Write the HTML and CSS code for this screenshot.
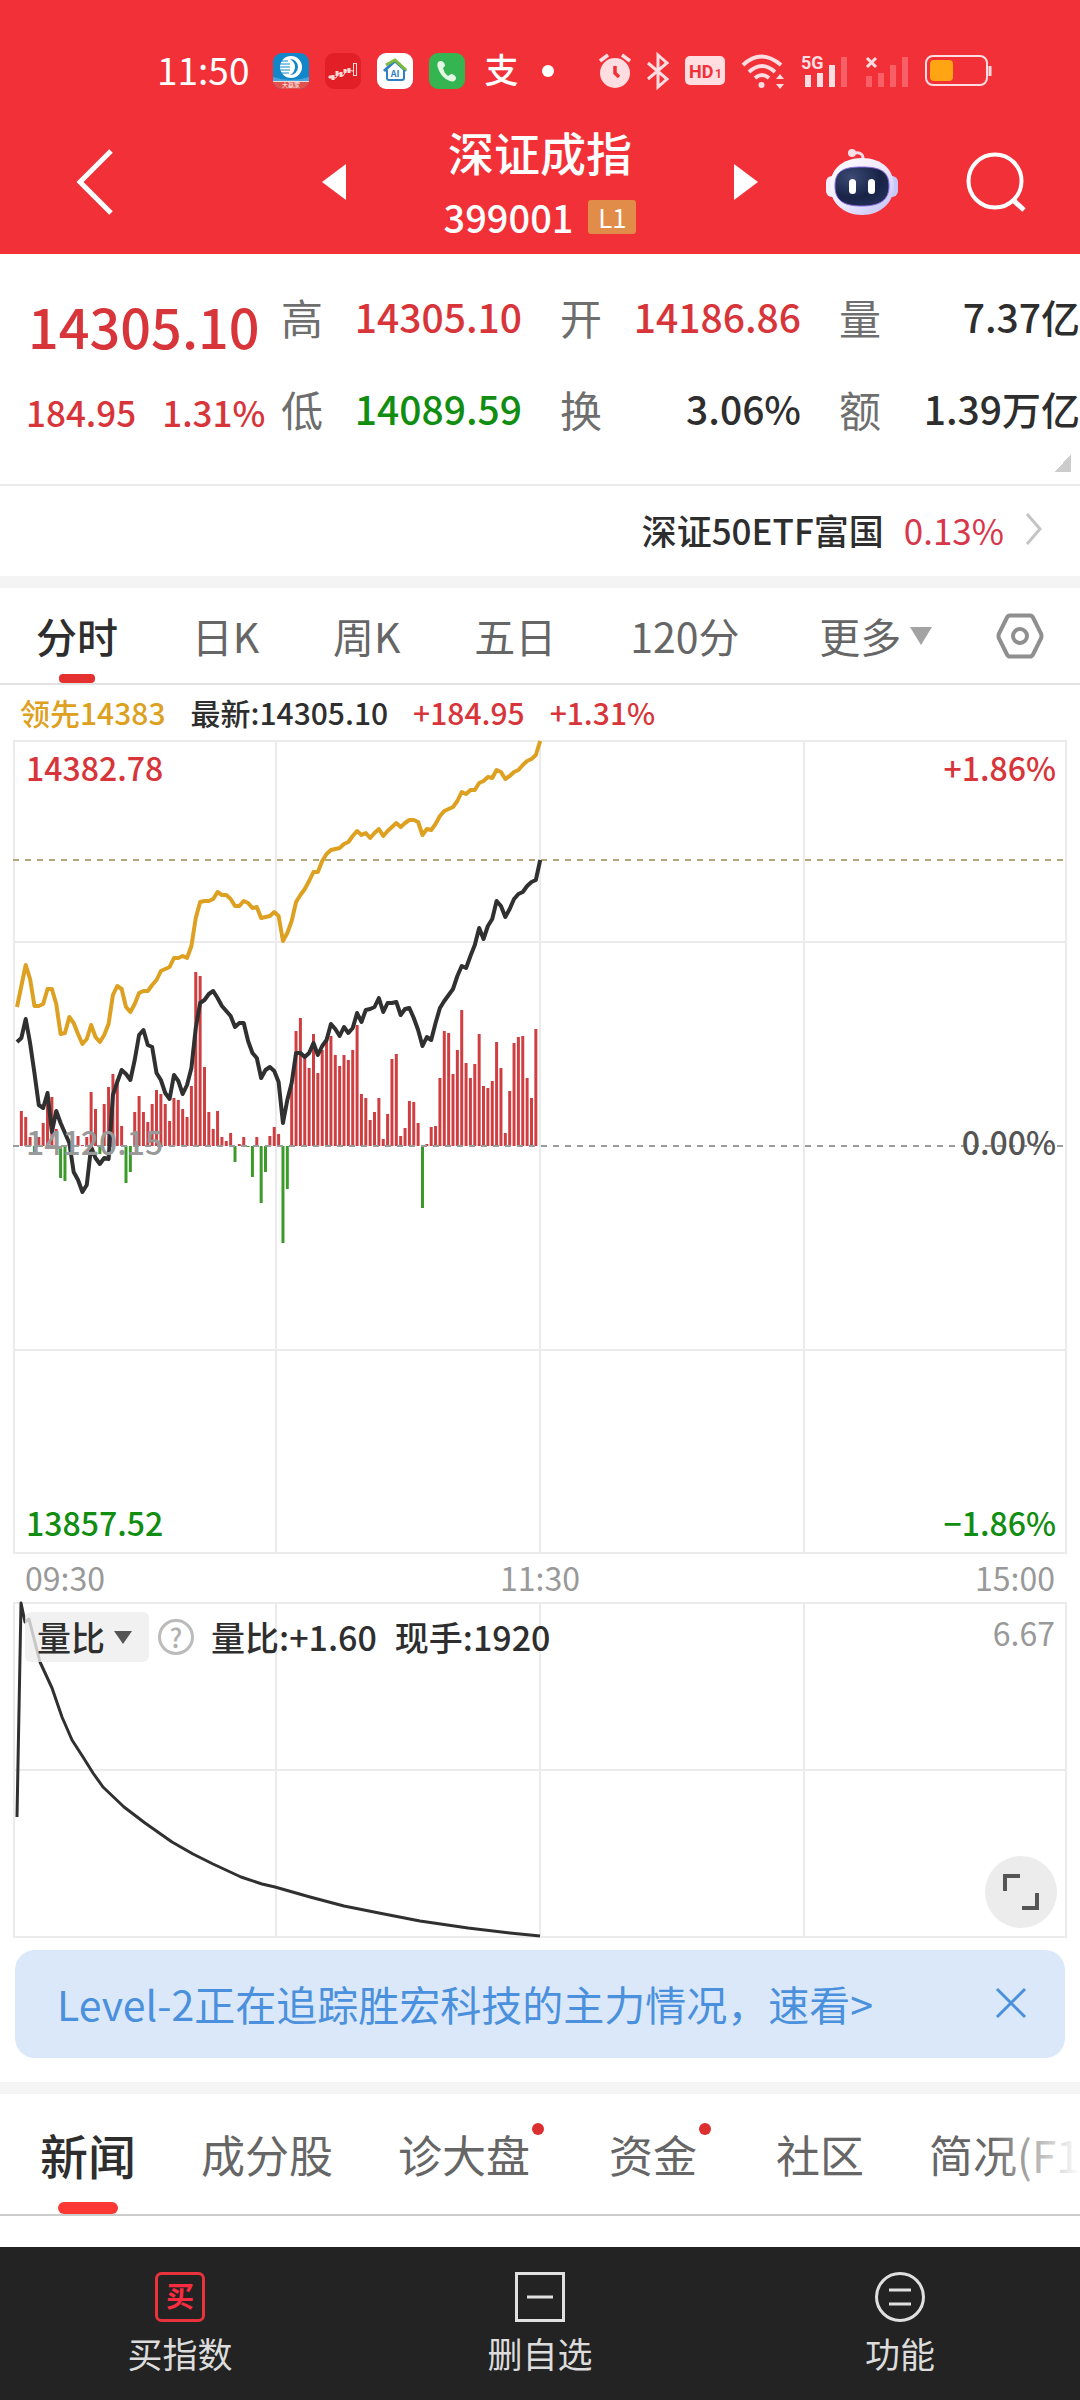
FILE: index.html
```html
<!DOCTYPE html>
<html lang="zh-CN">
<head>
<meta charset="utf-8">
<meta name="viewport" content="width=device-width, initial-scale=1">
<title>深证成指 399001</title>
<link rel="stylesheet" href="styles.css">
</head>
<body>
<div class="app">
  <header class="top">
    <div class="status">
      <div class="status-left">
        <span class="clock">11:50</span>
        <svg class="app-icon" viewBox="0 0 36 36" aria-hidden="true">
          <rect width="36" height="36" rx="9" fill="#1187c9"/>
          <path d="M0 27h36a9 9 0 0 1-9 9H9a9 9 0 0 1-9-9z" fill="#e0524c"/>
          <path d="M0 24q18 6 36 0v4H0z" fill="#4aa3dc"/>
          <path d="M0 28.500h36" stroke="#f6d9d6" stroke-width="1"/>
          <circle cx="18" cy="14" r="11" fill="#fff"/>
          <path d="M17 6a8 8 0 0 1 0 16q5-3 5-8t-5-8z" fill="#1187c9"/>
          <path d="M6 8h9M5 11h12M5 14h12M5 17h12M7 20h9" stroke="#1187c9" stroke-width="1.200"/>
          <text x="18" y="34" text-anchor="middle" font-size="6" fill="#fff">大赢家</text>
        </svg>
        <svg class="app-icon" viewBox="0 0 36 36" aria-hidden="true">
          <rect width="36" height="36" rx="9" fill="#e21f26"/>
          <path d="M4 24h3M8 22v5M12 18v5M16 19v5M20 16v4M24 15v5" stroke="#ffd9d6" stroke-width="3"/>
          <path d="M3 24l8 1 3-5 4 3 4-6 6 1" stroke="#ffd9d6" fill="none"/>
          <rect x="28.500" y="10.500" width="3" height="12" fill="none" stroke="#ffd9d6"/>
        </svg>
        <svg class="app-icon" viewBox="0 0 36 36" aria-hidden="true">
          <rect width="36" height="36" rx="9" fill="#fff"/>
          <path d="M7 18 18 8l11 10" fill="none" stroke="#2f7fc4" stroke-width="3"/>
          <path d="M9 12 18 7l11 10" fill="none" stroke="#7dbb3c" stroke-width="3"/>
          <path d="M10 17v8q0 2 2 2h13q2 0 2-2v-8" fill="none" stroke="#2f7fc4" stroke-width="2"/>
          <text x="18" y="24" text-anchor="middle" font-size="9" font-weight="700" fill="#2f7fc4">AI</text>
        </svg>
        <svg class="app-icon" viewBox="0 0 36 36" aria-hidden="true">
          <rect width="36" height="36" rx="9" fill="#35b452"/>
          <path d="M11 8c-3 1-3 4-2 7 2 6 6 11 12 13 3 1 6 0 6-3 0-2-3-4-5-4l-3 2c-3-2-4-5-5-8l2-2c0-3-2-5-5-5z" fill="#e2f8e4"/>
        </svg>
        <span class="pay" aria-hidden="true">支</span>
        <span class="more-dot"></span>
      </div>
      <div class="status-right">
        <svg width="32" height="36" viewBox="0 0 32 36" aria-hidden="true">
          <circle cx="16" cy="20" r="15" fill="#ffdde0"/>
          <path d="M1 8 9 2M31 8l-8-6" stroke="#ffdde0" stroke-width="3.500"/>
          <path d="M16 13v7l4 4" fill="none" stroke="#f23038" stroke-width="3.500"/>
        </svg>
        <svg width="22" height="36" viewBox="0 0 22 36" aria-hidden="true">
          <path d="M1 10 20 26l-9 8V2l9 8L1 26" fill="none" stroke="#ffdde0" stroke-width="3"/>
        </svg>
        <svg width="40" height="30" viewBox="0 0 40 30" aria-hidden="true">
          <rect width="40" height="29" rx="5" fill="#ffdde0"/>
          <text x="4" y="22" font-size="18" font-weight="700" fill="#f23038" class="mark">HD</text>
          <text x="30" y="22" font-size="12" font-weight="700" fill="#f23038" class="mark">1</text>
        </svg>
        <svg width="44" height="36" viewBox="0 0 44 36" aria-hidden="true">
          <g fill="none" stroke="#ffdde0" stroke-width="4"><path d="M2 12q18-17 38 0"/><path d="M8 19q13-12 26 0"/><path d="M14 25q7-6 14 0"/></g>
          <circle cx="20.500" cy="32" r="3" fill="#ffdde0"/>
          <path d="M39 21l4 5h-8zM39 36l4-5h-8z" fill="#ffdde0"/>
        </svg>
        <svg width="48" height="36" viewBox="0 0 48 36" aria-hidden="true">
          <text x="0" y="16" font-size="18" font-weight="700" fill="#ffdde0" class="mark">5G</text>
          <path d="M7 22v12M19 20v14M31 12v22" stroke="#ffdde0" stroke-width="6"/>
          <path d="M43 4v30" stroke="#f85f66" stroke-width="6"/>
        </svg>
        <svg width="44" height="36" viewBox="0 0 44 36" aria-hidden="true">
          <path d="M2 5l9 9M11 5l-9 9" stroke="#ffdde0" stroke-width="3"/>
          <path d="M4 23v11M16 20v14M28 12v22M40 4v30" stroke="#f85f66" stroke-width="6"/>
        </svg>
        <svg width="67" height="32" viewBox="0 0 67 32" aria-hidden="true">
          <rect x="1" y="1" width="61" height="29" rx="7" fill="none" stroke="#ffdde0" stroke-width="2"/>
          <rect x="5" y="5" width="23" height="21" rx="4" fill="#ffa412"/>
          <path d="M65 11v10" stroke="#ffdde0" stroke-width="3"/>
        </svg>
      </div>
    </div>
    <nav class="titlebar">
      <div class="title-left">
        <button class="icon-btn" aria-label="返回"><svg width="38" height="66" viewBox="0 0 38 66"><path d="M35 2 4 33l31 31" fill="none" stroke="#fff" stroke-width="5"/></svg></button>
        <button class="icon-btn" aria-label="上一个"><svg width="24" height="36" viewBox="0 0 24 36"><path d="M24 0v36L0 18z" fill="#fff"/></svg></button>
      </div>
      <div class="title-mid">
        <h1>深证成指</h1>
        <div class="code">399001<span class="badge">L1</span></div>
      </div>
      <div class="title-right">
        <button class="icon-btn" aria-label="下一个"><svg width="24" height="36" viewBox="0 0 24 36"><path d="M0 0v36l24-18z" fill="#fff"/></svg></button>
        <button class="icon-btn robot" aria-label="智能助手">
          <svg width="72" height="68" viewBox="0 0 72 68">
            <defs><linearGradient id="shell" x1="0" y1="0" x2="1" y2="1"><stop offset="0" stop-color="#fff"/><stop offset=".5" stop-color="#efe9ff"/><stop offset="1" stop-color="#bdbdf5"/></linearGradient>
            <radialGradient id="visor" cx=".3" cy=".25" r=".9"><stop offset="0" stop-color="#3b4a74"/><stop offset=".6" stop-color="#182346"/><stop offset="1" stop-color="#26305c"/></radialGradient></defs>
            <path d="M28 5q10-2 9 8" fill="none" stroke="#f3dcea" stroke-width="3"/><circle cx="26" cy="5" r="4" fill="#f8dfe8"/>
            <rect y="28" width="12" height="21" rx="6" fill="#f3eefc"/><rect x="60" y="28" width="12" height="21" rx="6" fill="#c6c8fa"/>
            <path d="M36 10c20 0 32 12 32 28S55 67 36 67 4 54 4 38s12-28 32-28z" fill="url(#shell)"/>
            <path d="M36 19c19 0 27 5 27 19S54 58 36 58 9 53 9 38s8-19 27-19z" fill="url(#visor)" stroke="#8667df" stroke-width="1"/>
            <rect x="23" y="31" width="7" height="15" rx="3.500" fill="#fff"/><rect x="42" y="31" width="7" height="15" rx="3.500" fill="#fff"/>
          </svg>
        </button>
        <button class="icon-btn" aria-label="搜索"><svg width="60" height="60" viewBox="0 0 60 60"><circle cx="29" cy="29" r="26.500" fill="none" stroke="#fff" stroke-width="4"/><path d="M47 48l11 10" stroke="#fff" stroke-width="5"/></svg></button>
      </div>
    </nav>
  </header>

  <main>
    <section class="quote">
      <div class="last">
        <strong class="up price">14305.10</strong>
        <div class="change up"><span>184.95</span><span>1.31%</span></div>
      </div>
      <dl class="stats">
        <div><dt>高</dt><dd class="up">14305.10</dd></div>
        <div><dt>开</dt><dd class="up">14186.86</dd></div>
        <div><dt>量</dt><dd>7.37亿</dd></div>
        <div><dt>低</dt><dd class="down">14089.59</dd></div>
        <div><dt>换</dt><dd>3.06%</dd></div>
        <div><dt>额</dt><dd>1.39万亿</dd></div>
      </dl>
      <span class="corner"></span>
    </section>

    <a class="etf" href="#etf">
      <span>深证50ETF富国</span><span class="etf-rate">0.13%</span>
      <svg width="20" height="34" viewBox="0 0 20 34" aria-hidden="true"><path d="M3 2l13 15L3 32" fill="none" stroke="#c4c4c4" stroke-width="3"/></svg>
    </a>

    <nav class="periods">
      <button class="on">分时</button>
      <button>日K</button>
      <button>周K</button>
      <button>五日</button>
      <button>120分</button>
      <button class="more">更多<svg width="22" height="18" viewBox="0 0 22 18" aria-hidden="true"><path d="M0 0h22L11 18z" fill="#a3a3a3"/></svg></button>
      <button aria-label="设置"><svg width="48" height="46" viewBox="0 0 48 46"><path d="M14 2.500h20q2 0 3 2l8 16q1 2.500 0 5l-8 16q-1 2-3 2H14q-2 0-3-2l-8-16q-1-2.500 0-5l8-16q1-2 3-2z" fill="none" stroke="#8f8f8f" stroke-width="4"/><circle cx="24" cy="23" r="7" fill="none" stroke="#8f8f8f" stroke-width="4"/></svg></button>
    </nav>

    <section class="charts">
      <div class="legend"><span class="lead">领先14383</span><span>最新:14305.10</span><span class="up">+184.95</span><span class="up">+1.31%</span></div>
      <div class="plot">
        <svg viewBox="0 0 1054 814" role="img" aria-label="分时走势">
          <path class="grid" d="M1 1H1053V813H1zM263 1V813M527 1V813M791 1V813M1 202H1053M1 610H1053"/>
          <g id="bars"></g>
          <path d="M0 120H1054" stroke="#b7a57c" stroke-width="2" stroke-dasharray="6 6" fill="none"/>
          <path d="M0 406H1054" stroke="#9b9b9b" stroke-width="2" stroke-dasharray="6 6" fill="none"/>
          <polyline id="lead-line" class="line" stroke="#dda021"/>
          <polyline id="price-line" class="line" stroke="#303030"/>
        </svg>
        <div class="axis axis-top up"><span>14382.78</span><span>+1.86%</span></div>
        <div class="axis axis-mid"><span class="base">14120.15</span><span>0.00%</span></div>
        <div class="axis axis-bottom down"><span>13857.52</span><span>−1.86%</span></div>
      </div>
      <div class="times"><span>09:30</span><span>11:30</span><span>15:00</span></div>
      <div class="plot">
        <svg viewBox="0 0 1054 336" role="img" aria-label="量比走势">
          <path class="grid" d="M1 1H1053V335H1zM263 1V335M527 1V335M791 1V335M1 168H1053"/>
          <polyline class="line thin" stroke="#303030" points="4,215 8,1 12,20 16,17 27,60 39,86 49,115 59,138 70,155 80,171 90,185 111,205 132,221 159,240 180,252 200,262 228,275 249,282 262,285 297,295 331,304 366,311 407,319 455,326 497,331 527,334"/>
        </svg>
        <div class="indicator">
          <button class="chip">量比<svg width="18" height="13" viewBox="0 0 18 13" aria-hidden="true"><path d="M0 0h18L9 13z" fill="#555"/></svg></button>
          <button class="help" aria-label="说明">?</button>
          <span>量比:+1.60</span><span class="hand">现手:1920</span>
          <span class="peak">6.67</span>
        </div>
        <button class="expand" aria-label="全屏"><svg width="38" height="38" viewBox="0 0 38 38"><path d="M3 18V3h15M35 20v15H20" fill="none" stroke="#555" stroke-width="4"/></svg></button>
      </div>
    </section>

    <aside class="notice">
      <a href="#level2">Level-2正在追踪胜宏科技的主力情况，速看&gt;</a>
      <button aria-label="关闭"><svg width="32" height="30" viewBox="0 0 32 30"><path d="M2 1l28 28M30 1 2 29" stroke="#4a90dc" stroke-width="3"/></svg></button>
    </aside>

    <nav class="sections">
      <button class="on">新闻</button>
      <button>成分股</button>
      <button class="dot">诊大盘</button>
      <button class="dot">资金</button>
      <button>社区</button>
      <button>简况(F10)</button>
    </nav>
  </main>

  <footer class="actions">
    <button><svg width="50" height="50" viewBox="0 0 50 50" aria-hidden="true"><rect x="1.500" y="1.500" width="47" height="47" rx="5" fill="none" stroke="#e8323c" stroke-width="3"/><text x="25" y="35" text-anchor="middle" font-size="28" font-weight="700" fill="#fb2b40">买</text></svg>买指数</button>
    <button><svg width="50" height="50" viewBox="0 0 50 50" aria-hidden="true"><rect x="1.500" y="1.500" width="47" height="47" fill="none" stroke="#e0e0e0" stroke-width="3"/><path d="M12 25h26" stroke="#e0e0e0" stroke-width="3"/></svg>删自选</button>
    <button><svg width="50" height="50" viewBox="0 0 50 50" aria-hidden="true"><circle cx="25" cy="25" r="23.500" fill="none" stroke="#e0e0e0" stroke-width="3"/><path d="M14 18h22M14 32h22" stroke="#e0e0e0" stroke-width="3"/></svg>功能</button>
  </footer>
</div>
<script src="chart.js"></script>
</body>
</html>
```
FILE: styles.css
```css
* { box-sizing: border-box; margin: 0; padding: 0; }
body {
  font-family: "Noto Sans CJK SC", "Noto Sans", sans-serif;
  color: #2e2e2e;
  background: #fff;
}
svg { display: block; flex: none; overflow: visible; }
button { border: 0; background: none; font: inherit; color: inherit; line-height: inherit; cursor: pointer; }
a { color: inherit; text-decoration: none; }
.app { display: flex; flex-direction: column; min-height: 100vh; overflow: hidden; }
main { flex: 1; }
.up { color: #d8353a; }
.down { color: #118d11; }
.mark { font-family: Roboto, sans-serif; }

/* header */
.top { background: #f23038; color: #fff; height: 254px; padding-top: 46px; }
.status { display: flex; justify-content: space-between; align-items: center; height: 50px; padding: 0 88px 0 157px; }
.status-left, .status-right { display: flex; align-items: center; gap: 16px; }
.clock { font-size: 37px; line-height: 46px; margin: 0 8px 4px 0; }
.app-icon { width: 36px; height: 36px; }
.pay { font-size: 34px; line-height: 46px; font-weight: 500; margin: 0 0 4px 3px; }
.more-dot { width: 12px; height: 12px; border-radius: 50%; background: #fff; margin-left: 8px; }
.titlebar { display: grid; grid-template-columns: 1fr auto 1fr; padding-top: 20px; }
.title-left, .title-right { display: flex; align-items: center; justify-content: space-between; height: 132px; }
.title-left { padding: 0 98px 0 76px; }
.title-right { padding: 0 54px 0 98px; }
.icon-btn { display: block; }
.title-mid { text-align: center; }
h1 { font-size: 46px; line-height: 70px; font-weight: 500; }
.code { display: flex; align-items: center; justify-content: center; gap: 15px; font-size: 38px; line-height: 62px; font-weight: 500; }
.badge { width: 48px; height: 34px; border-radius: 3px; background: #e18d49; font-size: 26px; line-height: 34px; font-weight: 400; }

/* quote */
.quote { position: relative; display: grid; grid-template-columns: 281px 1fr; padding-top: 16px; height: 232px; border-bottom: 2px solid #ebebeb; }
.price { display: block; padding: 10px 0 0 28px; font-size: 54px; line-height: 92px; font-weight: 500; }
.change { display: flex; gap: 26px; padding-left: 26px; font-size: 35px; line-height: 80px; font-weight: 500; }
.stats { display: grid; grid-template-columns: repeat(3, 1fr); column-gap: 38px; align-content: start; }
.stats div { display: flex; justify-content: space-between; align-items: center; height: 92px; white-space: nowrap; }
dt { font-size: 42px; color: #6e6e6e; }
dd { font-size: 39px; font-weight: 500; }
.corner { position: absolute; right: 9px; bottom: 12px; width: 16px; height: 18px; background: linear-gradient(to bottom right, transparent 50%, #ccc 50%); }

.etf { display: flex; justify-content: flex-end; align-items: center; gap: 20px; height: 90px; padding: 0 36px 4px 0; font-size: 35px; font-weight: 500; }
.etf-rate { color: #d8364a; font-weight: 400; }

/* periods */
.periods { display: flex; justify-content: space-between; align-items: center; height: 109px; padding: 0 36px; border-top: 12px solid #f4f4f4; border-bottom: 2px solid #e2e2e2; font-size: 41px; line-height: 95px; color: #666; }
.on { position: relative; color: #2e2e2e; font-weight: 500; }
.on::after { content: ""; position: absolute; left: 50%; bottom: 0; width: 36px; height: 9px; margin-left: -18px; border-radius: 4px; background: #e4302f; }
.more { display: flex; align-items: center; gap: 9px; margin: 0 -10px 0 6px; }

/* charts */
.charts { padding: 0 13px; }
.legend { display: flex; gap: 25px; padding-left: 7px; font-size: 30px; line-height: 55px; font-weight: 500; }
.lead { color: #dda021; }
.plot { position: relative; }
.plot > svg { width: 100%; height: auto; }
.grid { fill: none; stroke: #ebebeb; stroke-width: 2; }
.line { fill: none; stroke-width: 4; stroke-linejoin: round; }
.thin { stroke-width: 3; }
.axis { position: absolute; left: 13px; right: 11px; display: flex; justify-content: space-between; font-size: 32px; line-height: 48px; font-weight: 500; }
.axis-top { top: 3px; }
.axis-mid { top: 50%; margin-top: -30px; color: #555; }
.axis-bottom { bottom: 8px; }
.base { color: #999; }
.times { display: flex; justify-content: space-between; padding: 0 12px 2px; font-size: 32px; line-height: 46px; color: #999; }
.indicator { position: absolute; top: 5px; left: 12px; right: 12px; display: flex; align-items: center; font-size: 34px; line-height: 50px; font-weight: 500; }
.chip { display: flex; align-items: center; gap: 9px; width: 124px; height: 50px; padding-left: 12px; border-radius: 6px; background: rgba(238, 238, 238, .8); }
.help { width: 36px; height: 36px; margin: 0 17px 0 9px; border: 3px solid #bbb; border-radius: 50%; font-size: 26px; line-height: 30px; color: #b0b0b0; }
.hand { margin-left: 18px; }
.peak { margin: 0 0 10px auto; color: #999; font-weight: 400; font-size: 32px; }
.expand { position: absolute; right: 10px; bottom: 10px; width: 72px; height: 72px; padding: 17px; border-radius: 50%; background: #ececec; }

/* notice */
.notice { display: flex; justify-content: space-between; align-items: center; height: 108px; margin: 12px 15px 24px; padding: 0 38px 2px 42px; border-radius: 20px; background: #dae8fa; color: #4a90dc; font-size: 41px; white-space: nowrap; }

/* sections */
.sections { position: relative; display: flex; gap: 65px; height: 134px; padding-left: 40px; border-top: 12px solid #f4f4f4; border-bottom: 2px solid #ccc; font-size: 44px; line-height: 120px; color: #666; white-space: nowrap; overflow: hidden; }
.sections::after { content: ""; position: absolute; right: 0; top: 0; width: 90px; height: 120px; background: linear-gradient(to right, rgba(255, 255, 255, 0), #fff); }
.sections .on { font-size: 48px; }
.sections .on::after { width: 60px; height: 12px; margin-left: -30px; border-radius: 6px; background: #fb3832; }
.dot { position: relative; margin-right: 14px; }
.dot::after { content: ""; position: absolute; top: 29px; right: -14px; width: 12px; height: 12px; border-radius: 50%; background: #dc3030; }

/* bottom actions */
.actions { display: grid; grid-template-columns: repeat(3, 1fr); height: 153px; background: #232323; color: #dcdcdc; font-size: 35px; line-height: 50px; }
.actions button { display: flex; flex-direction: column; align-items: center; padding-top: 25px; gap: 6px; }
```
FILE: chart.js
```js
// Minute samples for the morning session, measured down from the top of the plot.
const lead = [267,246,225,239,266,266,264,249,249,264,294,293,277,283,294,304,299,285,297,302,295,284,255,246,249,267,272,264,253,251,251,245,240,231,229,227,218,218,216,218,206,178,162,161,161,159,152,155,155,159,166,166,161,163,168,167,178,177,176,172,176,201,193,181,162,155,149,141,132,132,121,114,110,109,108,104,102,96,91,95,93,98,93,89,96,91,87,83,87,83,80,80,82,95,89,90,84,76,71,69,67,61,52,54,50,50,43,41,37,38,30,32,39,36,32,30,25,21,19,15,1];
const price = [302,298,279,303,333,365,368,353,392,371,383,393,403,432,440,452,445,407,418,424,418,419,355,342,330,334,340,320,295,290,305,307,333,340,353,359,335,341,354,345,328,288,263,260,254,251,258,266,271,276,287,283,283,301,313,318,338,330,327,331,342,383,360,343,313,313,317,313,303,315,306,300,284,289,296,287,293,288,273,282,270,269,267,258,272,263,263,262,275,269,268,278,290,306,297,300,283,268,261,255,249,236,226,228,216,205,188,199,186,179,161,166,177,169,159,154,152,146,142,140,120];
// Bar strength per minute: positive rises above the base line, negative falls below.
const bars = [0,35,29,9,-8,9,23,48,49,17,-32,-35,5,0,10,1,9,54,37,-8,42,59,72,67,20,-37,-26,34,50,34,24,42,56,52,42,25,48,46,37,29,60,174,170,79,34,17,35,9,5,13,-16,2,9,-1,-31,9,-57,-26,10,19,12,-97,-43,60,115,128,91,78,112,73,96,109,110,91,80,91,86,96,121,52,48,26,34,48,7,32,87,92,10,18,45,44,23,-62,2,19,20,68,115,113,72,96,136,83,68,82,112,60,58,65,104,78,13,55,103,109,110,68,48,117];

const BASE = 406, START = 4, STEP = 4.36;
const x = i => START + i * STEP;
const points = data => data.map((y, i) => `${x(i)},${y}`).join(" ");

document.getElementById("lead-line").setAttribute("points", points(lead));
document.getElementById("price-line").setAttribute("points", points(price));
document.getElementById("bars").innerHTML = bars.map((h, i) =>
  `<path d="M${x(i)} ${BASE}v${-h}" stroke="${h < 0 ? "#3c9a2a" : "#cf3f42"}" stroke-width="3"/>`).join("");
```
